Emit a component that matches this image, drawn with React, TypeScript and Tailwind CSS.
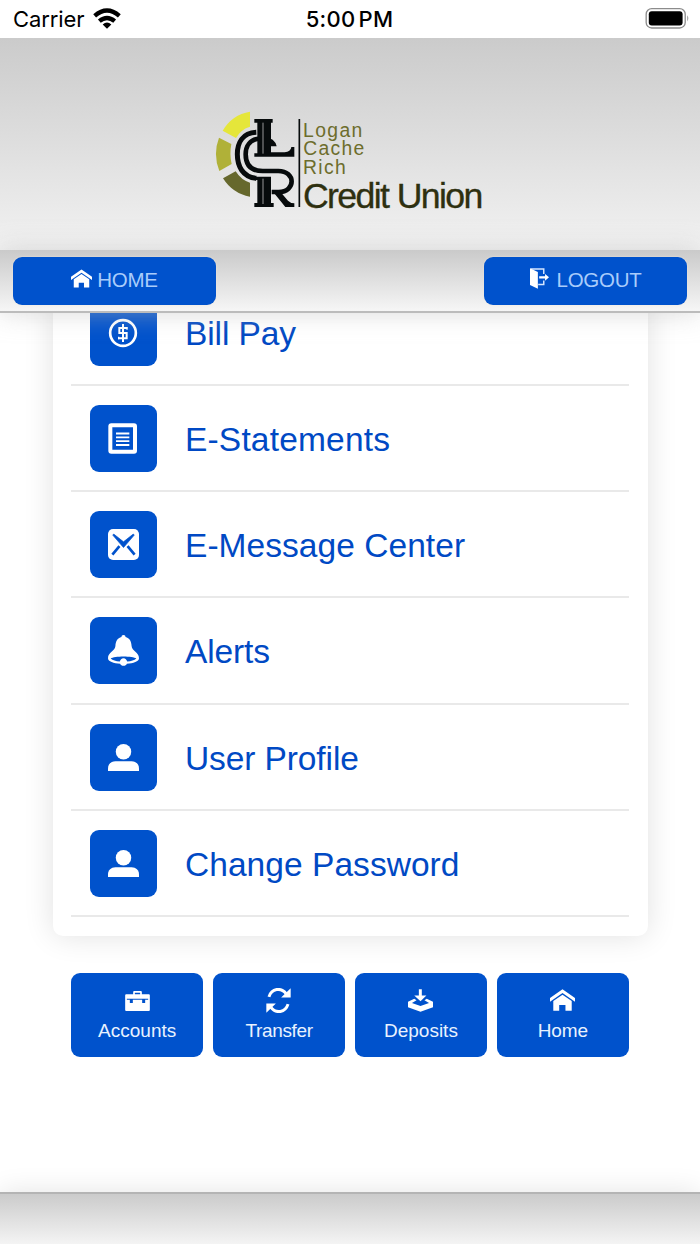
import React from "react";

const HomeGlyph = ({ className }: { className: string }) => (
  <svg viewBox="0 0 76 66" className={className} fill="#fff">
    <path d="M38 0 76 27v11L38 12 0 38V27Z" />
    <path d="M38 17 66 36v30H47V48H28v18H10V36Z" />
  </svg>
);

const LogoutGlyph = ({ className }: { className: string }) => (
  <svg viewBox="0 0 58 62" className={className}>
    <path d="M2 2H42V17M42 37V49H25" fill="none" stroke="#d5e6ff" strokeWidth="4.500" />
    <path d="M0 0 24 11V62L0 51Z" fill="#fff" />
    <path d="M28 24H46V17L58 27 46 38V31H28Z" fill="#fff" />
  </svg>
);

const DollarGlyph = () => (
  <svg viewBox="0 0 90 90" className="-ml-[2px] mt-[2px] h-[30px] w-[30px]" fill="none" stroke="#fff">
    <circle cx="45" cy="45" r="38.500" strokeWidth="8" />
    <path d="M58 30H34V45H56V61H30M45 18V72" strokeWidth="6" />
    <path d="M57 27V35M32 56V64" strokeWidth="4" />
  </svg>
);

const StatementGlyph = () => (
  <svg viewBox="0 0 90 92" className="-ml-[2px] h-[31px] w-[30px]" fill="none" stroke="#fff">
    <rect x="7" y="6" width="74" height="80" rx="3" strokeWidth="12" />
    <path d="M24 31H64M24 42.500H64M24 54H64M24 65.500H64" strokeWidth="5.500" />
  </svg>
);

const MailGlyph = () => (
  <svg viewBox="0 0 92 92" className="h-[31px] w-[31px]">
    <rect width="92" height="92" rx="15" fill="#fff" />
    <path d="M14 18 46 55 78 18 75 15 46 38 17 15Z" fill="#0052cc" stroke="#0052cc" strokeWidth="2" />
    <path d="M34 51 13 76M58 51 79 76" stroke="#0052cc" strokeWidth="8" />
  </svg>
);

const BellGlyph = () => (
  <svg viewBox="0 0 92 92" className="h-[31px] w-[31px]">
    <path
      fill="#fff"
      d="M46 0c4 0 6 2 6 6 12 3 17 12 18 27 1 16 22 18 22 36 0 10-17 15-36 16-2 4-5 6-10 6s-8-2-10-6C17 84 0 79 0 69 0 51 21 49 22 33 23 18 28 9 40 6c0-4 2-6 6-6Z"
    />
    <path fill="#0052cc" d="M8 70c10-8 66-8 76 0-6 5-15 8-27 9-2-6-5-10-11-10s-9 4-11 10C23 78 14 75 8 70Z" />
  </svg>
);

const UserGlyph = () => (
  <svg viewBox="0 0 92 80" className="h-[27px] w-[31px]" fill="#fff">
    <circle cx="46" cy="23" r="23" />
    <path d="M0 80V72C0 60 9 51 22 51H70C83 51 92 60 92 72V80Z" />
  </svg>
);

const BriefcaseGlyph = () => (
  <svg viewBox="0 0 74 60" className="mt-[1px] h-5 w-[25px]">
    <path fill="#fff" fillRule="evenodd" d="M24 10V3q0-3 3-3H47q3 0 3 3V10H71q3 0 3 3V57q0 3-3 3H3q-3 0-3-3V13q0-3 3-3ZM29 10H45V5H29Z" />
    <path fill="#0052cc" d="M5 23H69V26H60V36H51V26H23V36H14V26H5Z" />
  </svg>
);

const RefreshGlyph = () => (
  <svg viewBox="0 0 76 76" className="-ml-[1px] h-[25px] w-[25px]">
    <path d="M9 27C17 1 46-3 61 17M67 49C59 75 30 79 15 59" fill="none" stroke="#fff" strokeWidth="9" />
    <path d="M75 1V29H46ZM1 47H30L1 75Z" fill="#fff" />
  </svg>
);

const DepositGlyph = () => (
  <svg viewBox="0 0 76 69" className="h-[23px] w-[25px]" fill="#fff">
    <path d="M33 0H42V19H56L38 37 19 19H33Z" />
    <path fillRule="evenodd" d="M19 29 0 38V55L38 69 76 55V38L57 29 50 34 64 42 38 51 12 42 26 34Z" />
  </svg>
);

const Logo = () => (
  <svg viewBox="30 15 840 330" className="ml-[210px] h-[110px] w-[280px]">
    <path d="M150 35V80Q124 87 108 114L68 92Q96 44 150 35Z" fill="#e5e63a" />
    <path d="M57 113 94 132Q88 162 95 192L58 213Q38 162 57 113Z" fill="#b0b138" />
    <path d="M69 235 107 214Q124 241 150 248V290Q98 281 69 235Z" fill="#66682d" />
    <g fill="none" stroke="#070b0c">
      <path d="M169 97C128 99 112 128 112 163S128 231 169 235" strokeWidth="15" />
      <path d="M216 134C200 106 137 107 137 163C137 202 160 213 188 213H235C288 213 288 276 236 276H215" strokeWidth="14" />
      <path d="M298 57V321" strokeWidth="5" />
    </g>
    <path
      fill="#070b0c"
      d="M163 57H218V68H213V157H254Q272 156 274 141H283V170H163V160H172V68H163ZM163 230H213V309H221V321H163V309H172V240H163ZM194 112Q224 114 230 139H207L194 125ZM219 275H241L264 302Q272 310 283 310V321H256Z"
    />
    <path d="M189 68V161M189 236V312" stroke="#b5b5b5" strokeWidth="2.500" />
    <g fontFamily="Liberation Sans, Arial, sans-serif">
      <g fontSize="58" fill="#6d6d2c">
        <text x="309" y="110" textLength="178">Logan</text>
        <text x="310" y="166" textLength="183">Cache</text>
        <text x="309" y="222" textLength="128">Rich</text>
      </g>
      <text x="309" y="323" fontSize="107" textLength="541" fill="#2e3010" stroke="#2e3010" strokeWidth="1">
        Credit Union
      </text>
    </g>
  </svg>
);

const rows = [
  { label: "Bill Pay", icon: <DollarGlyph />, w: "tracking-[-0.1px]" },
  { label: "E-Statements", icon: <StatementGlyph />, w: "tracking-[0.18px]" },
  { label: "E-Message Center", icon: <MailGlyph />, w: "tracking-[0.05px]" },
  { label: "Alerts", icon: <BellGlyph />, w: "tracking-[-0.15px]" },
  { label: "User Profile", icon: <UserGlyph />, w: "tracking-[-0.1px]" },
  { label: "Change Password", icon: <UserGlyph />, w: "tracking-[0.05px]" },
];

const shortcuts = [
  { label: "Accounts", icon: <BriefcaseGlyph />, w: "tracking-[0px]" },
  { label: "Transfer", icon: <RefreshGlyph />, w: "tracking-[-0.35px]" },
  { label: "Deposits", icon: <DepositGlyph />, w: "tracking-[0px]" },
  { label: "Home", icon: <HomeGlyph className="h-[22px] w-[25px]" />, w: "tracking-[-0.1px]" },
];

export default function App() {
  return (
    <div className="flex h-[1244px] w-[700px] flex-col overflow-hidden bg-white font-['Liberation_Sans',Arial,sans-serif]">
      <div className="grid h-[38px] shrink-0 grid-cols-3 items-center pl-[13px] pr-[10px] font-['Inter',sans-serif] text-black">
        <div className="flex items-center gap-[9px]">
          <span className="text-[22px] leading-7 tracking-[-0.1px]">Carrier</span>
          <svg viewBox="0 0 84 62" className="mb-[1px] h-[21px] w-[28px]">
            <g fill="none" stroke="#000" strokeWidth="13">
              <path d="M5 23Q42-9 79 23" />
              <path d="M19 39Q42 20 65 39" />
            </g>
            <path d="M29 49Q42 37 55 49L42 62Z" />
          </svg>
        </div>
        <span className="-ml-[4px] text-center text-[22px] font-medium leading-7 tracking-[0.25px] [word-spacing:-3px]">5:00 PM</span>
        <svg viewBox="0 0 134 64" className="mb-[1px] h-[21px] w-[45px] justify-self-end">
          <rect x="2" y="2" width="119" height="59" rx="17" fill="none" stroke="#8c8c8c" strokeWidth="4" />
          <rect x="10" y="10" width="103" height="43" rx="9" />
          <path d="M127 22Q134 31 127 41Z" fill="#999" />
        </svg>
      </div>

      <header className="h-[212px] shrink-0 bg-linear-to-b from-[#cbcbcb] to-[#f2f2f2] pt-[67px]">
        <Logo />
      </header>

      <nav className="relative z-10 flex h-[63px] shrink-0 justify-between border-b-2 border-[#bcbcbc] bg-linear-to-b from-[#cacaca] to-[#f6f6f6] px-[13px] pt-[6.500px] shadow-[0_0_26px_rgba(190,190,190,0.55)]">
        <button className="flex h-[48px] w-[203px] items-center justify-center gap-[5px] rounded-[9px] bg-[#0052cc] text-[20.500px] text-[#a9ccfb] shadow-[0_0_2px_#f4e8d8]">
          <HomeGlyph className="mb-[4px] h-[19px] w-[21px]" />
          <span className="tracking-[-0.3px]">HOME</span>
        </button>
        <button className="flex h-[48px] w-[203px] items-center justify-center gap-[8px] rounded-[9px] bg-[#0052cc] text-[20.500px] text-[#a9ccfb] shadow-[0_0_2px_#f4e8d8]">
          <LogoutGlyph className="mb-[4px] h-[21px] w-[19px]" />
          <span className="tracking-[-0.3px]">LOGOUT</span>
        </button>
      </nav>

      <main className="h-[879px] shrink-0 overflow-hidden">
        <section className="mx-auto -mt-[54px] h-[677px] w-[595px] rounded-[10px] bg-white px-[18.500px] pt-[20.500px] shadow-[0_0_30px_rgba(0,0,0,0.12)]">
          {rows.map((r) => (
            <div key={r.label} className="flex h-[106.300px] items-start border-b-2 border-[#e9e9e9] pl-[19px] pt-[19px]">
              <span className="flex h-[67px] w-[67px] shrink-0 items-center justify-center rounded-[9px] bg-[#0052cc]">
                {r.icon}
              </span>
              <span className={`ml-[28px] pt-[1px] text-[33.500px] leading-[67px] text-[#0049c4] ${r.w}`}>{r.label}</span>
            </div>
          ))}
        </section>
        <div className="mx-auto mt-[37px] grid w-[558px] grid-cols-4 gap-[9.500px]">
          {shortcuts.map((s) => (
            <button key={s.label} className="flex h-[84px] flex-col items-center rounded-[9px] bg-[#0052cc] pt-[13px] text-[#e9f2ff]">
              <span className="flex h-[28px] items-center">{s.icon}</span>
              <span className={`text-[19px] leading-[34px] ${s.w}`}>{s.label}</span>
            </button>
          ))}
        </div>
      </main>

      <footer className="relative z-10 h-[52px] shrink-0 border-t-2 border-[#b4b4b4] bg-linear-to-b from-[#cbcbcb] to-[#f4f4f4] shadow-[0_0_28px_rgba(0,0,0,0.11)]" />
    </div>
  );
}
